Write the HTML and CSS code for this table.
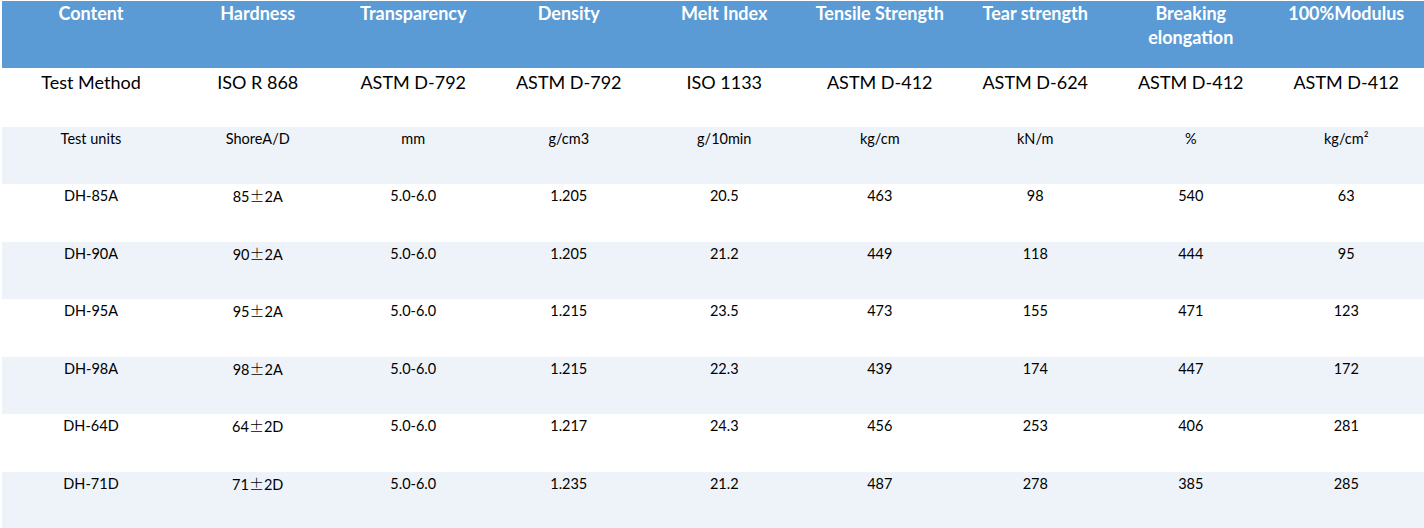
FILE: index.html
```html
<!DOCTYPE html>
<html>
<head>
<meta charset="utf-8">
<link rel="stylesheet" href="styles.css">
</head>
<body>
<div class="table">
  <div class="row head">
    <div class="cell">Content</div>
    <div class="cell">Hardness</div>
    <div class="cell">Transparency</div>
    <div class="cell">Density</div>
    <div class="cell">Melt Index</div>
    <div class="cell">Tensile Strength</div>
    <div class="cell">Tear strength</div>
    <div class="cell">Breaking<br>elongation</div>
    <div class="cell">100%Modulus</div>
  </div>
  <div class="row method">
    <div class="cell">Test Method</div>
    <div class="cell">ISO R 868</div>
    <div class="cell">ASTM D-792</div>
    <div class="cell">ASTM D-792</div>
    <div class="cell">ISO 1133</div>
    <div class="cell">ASTM D-412</div>
    <div class="cell">ASTM D-624</div>
    <div class="cell">ASTM D-412</div>
    <div class="cell">ASTM D-412</div>
  </div>
  <div class="row alt">
    <div class="cell">Test units</div>
    <div class="cell">ShoreA/D</div>
    <div class="cell">mm</div>
    <div class="cell">g/cm3</div>
    <div class="cell">g/10min</div>
    <div class="cell">kg/cm</div>
    <div class="cell">kN/m</div>
    <div class="cell">%</div>
    <div class="cell">kg/cm²</div>
  </div>
  <div class="row">
    <div class="cell">DH-85A</div>
    <div class="cell">85<span class="pm">±</span>2A</div>
    <div class="cell">5.0-6.0</div>
    <div class="cell">1.205</div>
    <div class="cell">20.5</div>
    <div class="cell">463</div>
    <div class="cell">98</div>
    <div class="cell">540</div>
    <div class="cell">63</div>
  </div>
  <div class="row alt">
    <div class="cell">DH-90A</div>
    <div class="cell">90<span class="pm">±</span>2A</div>
    <div class="cell">5.0-6.0</div>
    <div class="cell">1.205</div>
    <div class="cell">21.2</div>
    <div class="cell">449</div>
    <div class="cell">118</div>
    <div class="cell">444</div>
    <div class="cell">95</div>
  </div>
  <div class="row">
    <div class="cell">DH-95A</div>
    <div class="cell">95<span class="pm">±</span>2A</div>
    <div class="cell">5.0-6.0</div>
    <div class="cell">1.215</div>
    <div class="cell">23.5</div>
    <div class="cell">473</div>
    <div class="cell">155</div>
    <div class="cell">471</div>
    <div class="cell">123</div>
  </div>
  <div class="row alt">
    <div class="cell">DH-98A</div>
    <div class="cell">98<span class="pm">±</span>2A</div>
    <div class="cell">5.0-6.0</div>
    <div class="cell">1.215</div>
    <div class="cell">22.3</div>
    <div class="cell">439</div>
    <div class="cell">174</div>
    <div class="cell">447</div>
    <div class="cell">172</div>
  </div>
  <div class="row">
    <div class="cell">DH-64D</div>
    <div class="cell">64<span class="pm">±</span>2D</div>
    <div class="cell">5.0-6.0</div>
    <div class="cell">1.217</div>
    <div class="cell">24.3</div>
    <div class="cell">456</div>
    <div class="cell">253</div>
    <div class="cell">406</div>
    <div class="cell">281</div>
  </div>
  <div class="row alt">
    <div class="cell">DH-71D</div>
    <div class="cell">71<span class="pm">±</span>2D</div>
    <div class="cell">5.0-6.0</div>
    <div class="cell">1.235</div>
    <div class="cell">21.2</div>
    <div class="cell">487</div>
    <div class="cell">278</div>
    <div class="cell">385</div>
    <div class="cell">285</div>
  </div>
</div>
</body>
</html>
```

FILE: styles.css
```css
html, body {
  margin: 0;
  padding: 0;
  background: #ffffff;
}
body {
  font-family: "Lato", "Noto Sans", sans-serif;
  color: #000000;
}
.table {
  padding: 1px 0 0 2px;
}
.row {
  display: grid;
  grid-template-columns: 178px repeat(8, 1fr);
  height: 57.5px;
  font-size: 14.5px;
  line-height: 17px;
  background: #ffffff;
}
.row.alt {
  background: #eef3fa;
}
.cell {
  text-align: center;
  padding-top: 3px;
}
.row.head {
  height: 67px;
  background: #5b9bd5;
  color: #ffffff;
  font-weight: 700;
  font-size: 18px;
  line-height: 24px;
}
.row.head .cell {
  padding-top: 0;
}
.row.method {
  height: 58.5px;
  font-size: 18px;
  line-height: 22px;
}
.pm {
  font-family: "Noto Sans CJK JP", sans-serif;
  font-weight: 300;
  font-size: 15px;
}
```
